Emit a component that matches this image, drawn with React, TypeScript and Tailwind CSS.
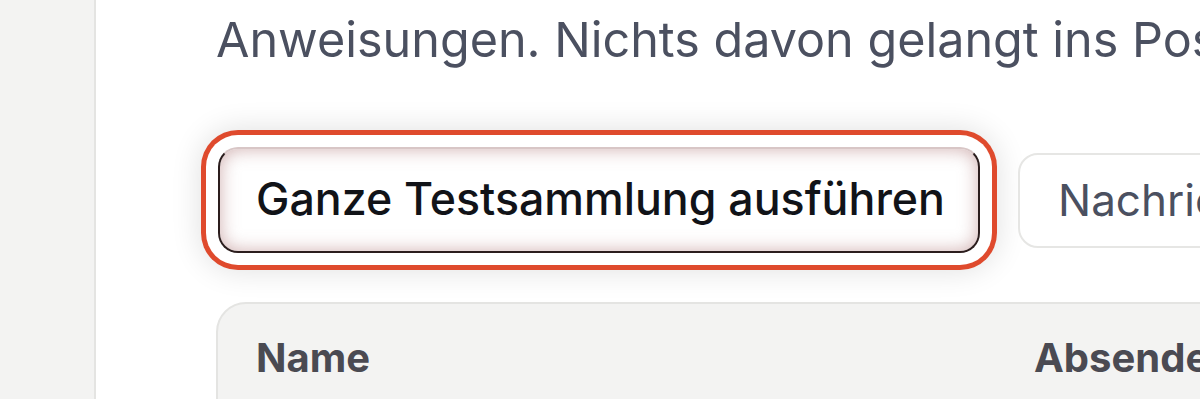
import React from "react";

export default function App() {
  return (
    <div className="flex h-[399px] w-[1200px] overflow-hidden bg-white" style={{ fontFamily: "Inter, 'Noto Sans', sans-serif" }}>
      <aside className="h-full w-[96px] shrink-0 border-r-2 border-[#e4e4e2] bg-[#f3f3f2]" />
      <main className="flex min-w-0 flex-1 flex-col pl-[120px]">
        <p className="mt-[10px] whitespace-nowrap text-[48.5px] leading-[60px] text-[#4b5060]">
          Anweisungen. Nichts davon gelangt ins Postfach.
        </p>
        <div className="mt-[77px] flex items-center gap-[38px] whitespace-nowrap">
          <button className="ml-[2px] flex h-[106px] w-[762px] shrink-0 items-center rounded-[20px] border-2 border-[#2b1d1d] border-t-[#d8c6c6] bg-white pl-[36px] text-[44.7px] font-medium text-[#111318] shadow-[inset_0_0_18px_rgba(170,110,110,0.55),0_0_0_12px_#ffffff,0_0_0_17px_#df4a2d,0_0_30px_18px_rgba(0,0,0,0.12)]">
            Ganze Testsammlung ausführen
          </button>
          <button className="flex h-[95px] shrink-0 items-center rounded-[20px] border-2 border-[#e6e6e4] bg-white px-[38px] text-[44px] text-[#4b5060]">
            Nachrichten
          </button>
        </div>
        <div className="mt-[49px] flex h-[200px] w-[1100px] shrink-0 rounded-tl-[30px] border-2 border-[#e4e4e2] bg-[#f3f3f2] pl-[38px] pt-[30px]">
          <div className="w-[778px] shrink-0 text-[40px] font-bold leading-[48px] text-[#4a4a52]">Name</div>
          <div className="text-[40px] font-bold leading-[48px] text-[#4a4a52]">Absender</div>
        </div>
      </main>
    </div>
  );
}
